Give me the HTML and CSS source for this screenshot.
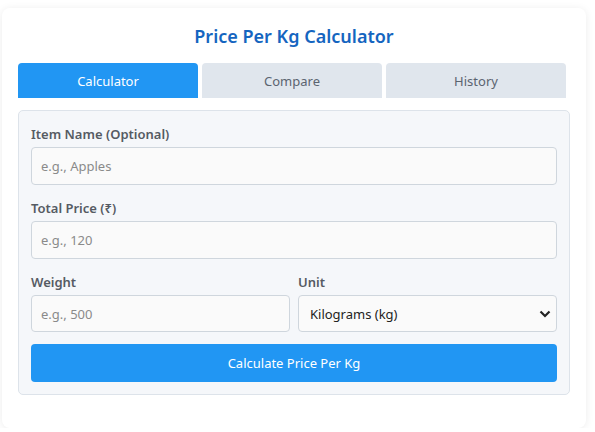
FILE: index.html
```html
<!DOCTYPE html>
<html>
<head>
  <title>Price Per Kg Calculator</title>
  <link rel="stylesheet" href="styles.css">
</head>
<body>
  <div class="card">
    <h1 class="title">Price Per Kg Calculator</h1>

    <div class="tabs">
      <button class="tab active">Calculator</button>
      <button class="tab">Compare</button>
      <button class="tab">History</button>
    </div>

    <form class="panel" id="calcForm">
      <div class="form-group">
        <label for="item">Item Name (Optional)</label>
        <input type="text" id="item" placeholder="e.g., Apples">
      </div>

      <div class="form-group">
        <label for="price">Total Price (₹)</label>
        <input type="text" id="price" placeholder="e.g., 120">
      </div>

      <div class="form-row">
        <div class="form-group">
          <label for="weight">Weight</label>
          <input type="text" id="weight" placeholder="e.g., 500">
        </div>
        <div class="form-group">
          <label for="unit">Unit</label>
          <div class="select-wrap">
            <select id="unit">
              <option>Kilograms (kg)</option>
              <option>Grams (g)</option>
            </select>
            <svg class="chevron" width="12" height="8" viewBox="0 0 12 8"><path d="M1.5 1.5 L6 6 L10.5 1.5" fill="none" stroke="#222" stroke-width="2.2"/></svg>
          </div>
        </div>
      </div>

      <button type="submit" class="calc-btn">Calculate Price Per Kg</button>
    </form>
  </div>
</body>
</html>
```

FILE: styles.css
```css
body { margin: 0; background: #fff; font-family: "Noto Sans", "Open Sans", sans-serif; }
.card { margin: 8px 9px 0 2px; background: #fff; border-radius: 8px; box-shadow: 0 1px 8px rgba(0,0,0,0.08); padding: 16px 16px 33px 16px; }
.title { margin: 0 0 15px 0; text-align: center; font-size: 18px; line-height: 24px; font-weight: 600; color: #1565c0; }
.tabs { display: flex; margin-bottom: 12px; }
.tab { flex: 1; height: 35px; margin-right: 4px; border: none; border-radius: 4px 4px 0 0; background: #e0e6ed; color: #5b6470; font-family: inherit; font-size: 13px; cursor: pointer; }
.tab.active { background: #2196f3; color: #fff; }
.panel { background: #f5f7fa; border: 1px solid #dde3ea; border-radius: 5px; padding: 13px 12px 12px 12px; }
.form-group { margin-bottom: 13px; }
.form-row { display: flex; gap: 8px; }
.form-row .form-group { flex: 1; margin-bottom: 12px; }
label { display: block; margin-bottom: 3px; font-size: 13px; line-height: 20px; font-weight: 600; color: #555b63; }
input, select { box-sizing: border-box; width: 100%; height: 38px; padding: 0 9px; border: 1px solid #cfd6dd; border-radius: 4px; background: #fafafa; font-family: inherit; font-size: 13px; color: #222; }
.form-row input, .form-row select { height: 37px; }
input::placeholder { color: #8a8a8a; }
.select-wrap { position: relative; }
select { appearance: none; -webkit-appearance: none; padding-left: 11px; }
.chevron { position: absolute; right: 6px; top: 15px; pointer-events: none; }
.calc-btn { width: 100%; height: 38px; border: none; border-radius: 4px; background: #2196f3; color: #fff; font-family: inherit; font-size: 13px; cursor: pointer; }
```
